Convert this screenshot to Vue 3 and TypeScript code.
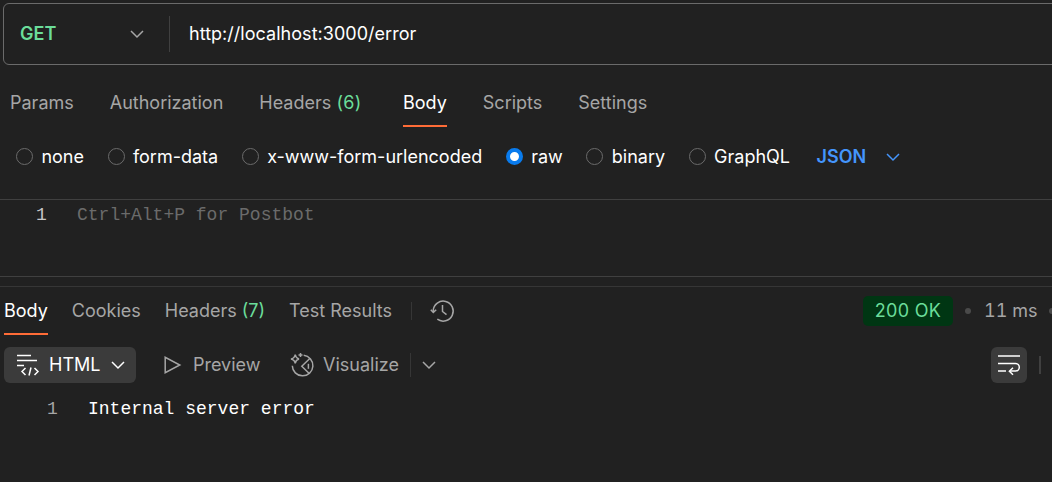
<script setup lang="ts">
interface Tab {
  label: string
  count?: number
  active?: boolean
}

const requestTabs: Tab[] = [
  { label: 'Params' },
  { label: 'Authorization' },
  { label: 'Headers', count: 6 },
  { label: 'Body', active: true },
  { label: 'Scripts' },
  { label: 'Settings' },
]

const responseTabs: Tab[] = [
  { label: 'Body', active: true },
  { label: 'Cookies' },
  { label: 'Headers', count: 7 },
  { label: 'Test Results' },
]

const bodyTypes: string[] = ['none', 'form-data', 'x-www-form-urlencoded', 'raw', 'binary', 'GraphQL']
const selectedType = 'raw'
</script>

<template>
  <main class="app">
    <section class="url-bar">
      <div class="method">
        <span>GET</span>
        <svg class="chevron" viewBox="0 0 14 8"><path d="M1 1l6 6 6-6" /></svg>
      </div>
      <div class="url">http://localhost:3000/error</div>
    </section>

    <nav class="tabs request-tabs">
      <div
        v-for="tab in requestTabs"
        :key="tab.label"
        class="tab"
        :class="{ active: tab.active, counted: tab.count }"
      >
        {{ tab.label }}<span v-if="tab.count" class="count"> ({{ tab.count }})</span>
      </div>
    </nav>

    <div class="body-types">
      <div v-for="type in bodyTypes" :key="type" class="option">
        <i class="radio" :class="{ checked: type === selectedType }"></i>
        <span>{{ type }}</span>
      </div>
      <div class="language">
        <span>JSON</span>
        <svg class="chevron" viewBox="0 0 14 8"><path d="M1 1l6 6 6-6" /></svg>
      </div>
    </div>

    <section class="editor">
      <span class="line-number">1</span>
      <span class="placeholder">Ctrl+Alt+P for Postbot</span>
    </section>
    <div class="splitter"></div>

    <header class="response-head">
      <nav class="tabs">
        <div v-for="tab in responseTabs" :key="tab.label" class="tab" :class="{ active: tab.active }">
          {{ tab.label }}<span v-if="tab.count" class="count"> ({{ tab.count }})</span>
        </div>
      </nav>
      <i class="separator history-separator"></i>
      <svg class="history" viewBox="0 0 24 24">
        <path d="M3.2 13V11.5A10 10 0 1 1 7.3 20.2" />
        <path d="M.8 10.8l2.5 2.6 2.9-2.6M12.5 6v6.5l4 3.2" />
      </svg>
      <div class="status">
        <span class="badge">200 OK</span>
        <i class="dot"></i>
        <span class="time">11 ms</span>
        <i class="dot last"></i>
      </div>
    </header>

    <div class="response-tools">
      <div class="format">
        <svg class="format-icon" viewBox="0 0 22 23">
          <path d="M0 1.5h14M0 6.5h20M0 11.5h7" />
          <path d="M8.5 14l-3.5 3.5L8.5 21M17.5 14l3.5 3.5-3.5 3.5M14 13.5l-2 8" />
        </svg>
        <span>HTML</span>
        <svg class="chevron" viewBox="0 0 14 8"><path d="M1 1l6 6 6-6" /></svg>
      </div>
      <div class="preview">
        <svg class="play" viewBox="0 0 17 18"><path d="M1.2 1.3v15.4L15.8 9z" /></svg>
        <span>Preview</span>
      </div>
      <div class="visualize">
        <svg class="visualize-icon" viewBox="0 0 24 24">
          <path d="M5.2 1.5Q5.8 5.2 9 6 5.8 6.8 5.2 10.3 4.6 6.8 1 6 4.6 5.2 5.2 1.5z" />
          <path d="M10.5 0v4M8.5 2h4" />
          <path d="M13.7 2.3A10.3 10.3 0 1 1 2.3 12.8" />
          <path d="M19.8 5.5L11.8 13.2 19.5 20.7" />
          <path d="M18.4 10.8v5" />
        </svg>
        <span>Visualize</span>
      </div>
      <i class="separator"></i>
      <svg class="chevron more" viewBox="0 0 14 8"><path d="M1 1l6 6 6-6" /></svg>
      <div class="wrap">
        <svg viewBox="0 0 24 22">
          <path d="M1 2h22M1 9.5h17.5a3.8 3.8 0 0 1 0 7.6H13M1 17h8" />
          <path d="M16 13.8l-3.6 3.4 3.6 3.6" />
        </svg>
      </div>
      <i class="edge"></i>
    </div>

    <section class="response-body">
      <span class="line-number">1</span>
      <span>Internal server error</span>
    </section>
  </main>
</template>

<style>
body {
  background: #212121;
}
</style>

<style scoped>
.app {
  width: 100%;
  height: 482px;
  overflow: hidden;
  background: #212121;
  color: #fff;
  font: 400 18px/24px Inter, sans-serif;
  white-space: nowrap;
}

svg {
  display: block;
  flex: none;
  fill: none;
  stroke: currentColor;
  stroke-width: 1.5;
  overflow: visible;
}

.chevron {
  width: 14px;
  height: 8px;
}

.url-bar {
  box-sizing: border-box;
  display: flex;
  align-items: center;
  height: 62px;
  margin: 3px -10px 0 3px;
  border: 1px solid #6b6b6b;
  border-radius: 6px;
}

.method {
  box-sizing: border-box;
  display: flex;
  align-items: center;
  justify-content: space-between;
  width: 166px;
  height: 36px;
  padding: 0 25px 0 16px;
  border-right: 1px solid #404040;
  color: #6bdd9a;
  font-weight: 600;
}

.method .chevron {
  color: #a6a6a6;
}

.url {
  padding-left: 19px;
  letter-spacing: 0.03px;
}

.tabs {
  display: flex;
  color: #a6a6a6;
}

.tab {
  box-sizing: border-box;
  white-space: pre;
}

.tab.active {
  color: #fff;
  border-bottom: 2px solid #ff6c37;
}

.count {
  color: #6bdd9a;
}

.request-tabs {
  gap: 36px;
  height: 36px;
  margin: 26px 0 0 10px;
}

.request-tabs .counted {
  margin-right: 5.6px;
}

.request-tabs .count {
  letter-spacing: 0.2px;
}

.body-types {
  display: flex;
  gap: 23.6px;
  align-items: center;
  height: 24px;
  margin: 18px 0 0 16px;
}

.option {
  display: flex;
  gap: 8.4px;
  align-items: center;
}

.radio {
  box-sizing: border-box;
  width: 17px;
  height: 17px;
  margin-top: -2px;
  border: 1px solid #6b6b6b;
  border-radius: 50%;
}

.radio.checked {
  border: 4px solid #097bed;
  background: #fff;
}

.language {
  display: flex;
  gap: 20px;
  align-items: center;
  margin-left: 3px;
  color: #4495fc;
  font-weight: 600;
}

.editor,
.response-body {
  display: flex;
  font-family: "Liberation Mono", monospace;
}

.editor {
  box-sizing: border-box;
  height: 78px;
  margin-top: 30px;
  padding-top: 3px;
  border-top: 1px solid #404040;
  border-bottom: 1px solid #404040;
}

.editor .line-number {
  width: 41px;
  padding-left: 36px;
  color: #c6c6c6;
}

.placeholder {
  color: #6b6b6b;
}

.splitter {
  height: 9px;
  border-bottom: 1px solid #363636;
}

.response-head {
  display: flex;
  height: 48px;
  padding-left: 4px;
}

.response-head .tabs {
  gap: 24px;
  height: 36px;
  margin-top: 12px;
}

.separator {
  width: 1px;
  height: 24px;
  background: #363636;
}

.history-separator {
  height: 18px;
  margin: 15px 18px 0 19px;
}

.history {
  width: 24px;
  height: 24px;
  margin-top: 12px;
  color: #a6a6a6;
}

.status {
  display: flex;
  align-items: center;
  height: 30px;
  margin: 9px -3px 0 auto;
  color: #a6a6a6;
}

.badge {
  box-sizing: border-box;
  width: 90px;
  border-radius: 5px;
  background: #003613;
  color: #6bdd9a;
  line-height: 30px;
  text-align: center;
  letter-spacing: 0.3px;
}

.time {
  width: 52px;
  font-variant-numeric: tabular-nums;
}

.dot {
  width: 6px;
  height: 6px;
  margin: 0 13px 0 12px;
  border-radius: 50%;
  background: #4a4a4a;
}

.dot.last {
  margin: 0 0 0 13px;
}

.response-tools {
  display: flex;
  align-items: center;
  height: 36px;
  margin-top: 12px;
  padding-left: 4px;
  color: #a6a6a6;
}

.format {
  box-sizing: border-box;
  display: flex;
  align-items: center;
  width: 132px;
  height: 36px;
  padding: 0 11px 0 13px;
  border-radius: 6px;
  background: #3b3b3b;
  color: #fff;
}

.format-icon {
  width: 22px;
  height: 23px;
  margin-right: 10px;
}

.format .chevron {
  margin-left: auto;
}

.preview {
  display: flex;
  align-items: center;
  margin-left: 28px;
}

.play {
  width: 17px;
  height: 18px;
  margin-right: 12px;
}

.visualize {
  display: flex;
  align-items: center;
  margin-left: 29.5px;
}

.visualize-icon {
  width: 24px;
  height: 24px;
  margin-right: 9px;
}

.response-tools .separator {
  margin-left: 11.5px;
}

.more {
  margin-left: 11px;
}

.wrap {
  display: flex;
  align-items: center;
  justify-content: center;
  width: 36px;
  height: 36px;
  margin-left: auto;
  border-radius: 6px;
  background: #3b3b3b;
  color: #fff;
}

.wrap svg {
  width: 24px;
  height: 22px;
}

.edge {
  width: 2px;
  height: 18px;
  margin: 0 11px 0 12px;
  background: #404040;
}

.response-body {
  margin-top: 14px;
}

.response-body .line-number {
  width: 41px;
  padding-left: 47px;
  color: #a6a6a6;
}
</style>
